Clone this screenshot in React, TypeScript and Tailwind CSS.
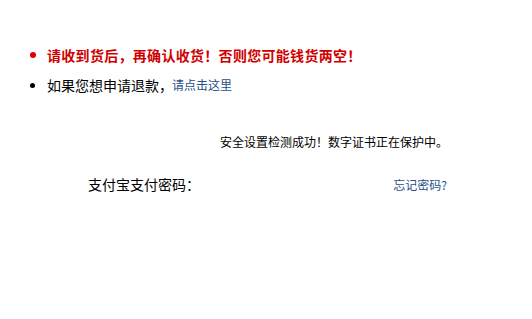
export default function App() {
  const font = { fontFamily: '"Noto Sans CJK SC", "Liberation Sans", sans-serif' };
  return (
    <div className="w-[532px] h-[319px] bg-white text-black" style={font}>
      <ul className="pt-[44px] pl-[30px]">
        <li className="flex items-center h-[22px]">
          <span className="w-[6px] h-[6px] rounded-full bg-[#e00000] mr-[11px]" />
          <span className="text-[14px] font-bold text-[#d00000] tracking-[0.3px]">
            请收到货后，再确认收货！否则您可能钱货两空！
          </span>
        </li>
        <li className="flex items-center h-[22px] mt-[8px]">
          <span className="w-[5px] h-[5px] rounded-full bg-black mr-[12px]" />
          <span className="text-[14px]">如果您想申请退款，</span>
          <a className="text-[12px] text-[#1f4f86] ml-[-1px]">请点击这里</a>
        </li>
      </ul>
      <div className="flex flex-col pl-[220px] mt-[37px]">
        <p className="text-[12px] h-[18px] leading-[18px]">安全设置检测成功！数字证书正在保护中。</p>
      </div>
      <div className="flex items-center mt-[23px] pl-[88px] pr-[85px] justify-between">
        <span className="text-[14px]">支付宝支付密码：</span>
        <a className="text-[12px] text-[#1f4f86]">忘记密码?</a>
      </div>
    </div>
  );
}
